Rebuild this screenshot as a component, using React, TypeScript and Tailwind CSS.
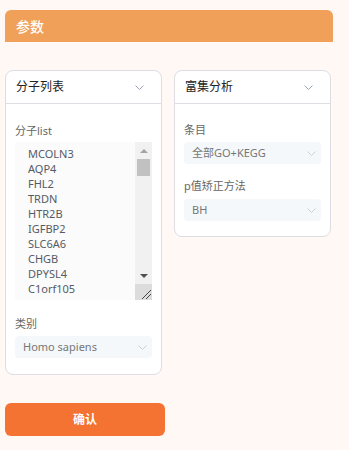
import React from "react";

const genes = [
  "MCOLN3",
  "AQP4",
  "FHL2",
  "TRDN",
  "HTR2B",
  "IGFBP2",
  "SLC6A6",
  "CHGB",
  "DPYSL4",
  "C1orf105",
  "NPR3",
];

const font = { fontFamily: '"Noto Sans", "Noto Sans CJK SC", sans-serif' };

function Chevron({ className }: { className?: string }) {
  return (
    <svg width="9" height="5" viewBox="0 0 9 5" className={className} fill="none">
      <path d="M0.5 0.5 L4.5 4.5 L8.5 0.5" stroke="currentColor" strokeWidth="1" />
    </svg>
  );
}

function SelectBox({ value }: { value: string }) {
  return (
    <div className="flex h-[22px] items-center justify-between rounded-[4px] bg-[#f4f8fa] pl-2 pr-[5px] text-[11px] text-[#777]">
      <span>{value}</span>
      <Chevron className="text-[#ccd0d6]" />
    </div>
  );
}

function CardHeader({ title }: { title: string }) {
  return (
    <div className="flex h-[33px] items-center justify-between border-b border-[#dcdee3] pl-[10px] pr-[17px]">
      <span className="text-[12px] font-normal text-[#222]">{title}</span>
      <Chevron className="text-[#9aa6b8]" />
    </div>
  );
}

export default function App() {
  return (
    <div className="min-h-[450px] w-[349px] bg-[#fff8f5] pl-[5px] pt-[10px]" style={font}>
      <div className="flex h-[32px] w-[328px] items-center rounded-t-[6px] bg-[#f0a058] pl-[11px] text-[14px] font-medium text-white">
        参数
      </div>

      <div className="mt-[28px] flex items-start gap-[12px]">
        {/* left card */}
        <div className="h-[305px] w-[157px] rounded-[8px] border border-[#dcdee3] bg-white">
          <CardHeader title="分子列表" />
          <div className="px-[9px] pt-[19px]">
            <div className="h-[16px] text-[11px] leading-[16px] text-[#666]">分子list</div>
            <div className="mt-[3px] flex h-[158px] w-[137px] overflow-hidden bg-[#fbfbfb]">
              <div className="h-[158px] flex-1 overflow-hidden pl-[13px] pt-[4px] text-[11px] leading-[15px] text-[#555a66]">
                {genes.map((g) => (
                  <div key={g}>{g}</div>
                ))}
              </div>
              <div className="flex w-[17px] flex-col bg-[#f1f1f1]">
                <div className="flex h-[17px] items-center justify-center">
                  <svg width="8" height="4" viewBox="0 0 8 4">
                    <path d="M0 4 L4 0 L8 4 Z" fill="#a3a3a3" />
                  </svg>
                </div>
                <div className="mx-[2px] h-[17px] bg-[#c1c1c1]" />
                <div className="flex-1" />
                <div className="flex h-[17px] items-center justify-center">
                  <svg width="8" height="4" viewBox="0 0 8 4">
                    <path d="M0 0 L8 0 L4 4 Z" fill="#505050" />
                  </svg>
                </div>
                <div className="flex h-[16px] items-end justify-end bg-[#dcdcdc]">
                  <svg width="14" height="14" viewBox="0 0 14 14">
                    <path d="M4 13 L13 4 M8 13 L13 8" stroke="#444" strokeWidth="1" />
                  </svg>
                </div>
              </div>
            </div>
            <div className="mt-[16px] h-[16px] text-[11px] leading-[16px] text-[#666]">类别</div>
            <div className="mt-[4px]">
              <SelectBox value="Homo sapiens" />
            </div>
          </div>
        </div>

        {/* right card */}
        <div className="h-[167px] w-[157px] rounded-[8px] border border-[#dcdee3] bg-white">
          <CardHeader title="富集分析" />
          <div className="px-[9px] pt-[18px]">
            <div className="h-[16px] text-[11px] leading-[16px] text-[#666]">条目</div>
            <div className="mt-[4px]">
              <SelectBox value="全部GO+KEGG" />
            </div>
            <div className="mt-[14px] h-[16px] text-[11px] leading-[16px] text-[#666]">p值矫正方法</div>
            <div className="mt-[5px]">
              <SelectBox value="BH" />
            </div>
          </div>
        </div>
      </div>

      <button className="mt-[28px] flex h-[33px] w-[160px] items-center justify-center rounded-[6px] bg-[#f47232] text-[12px] font-semibold text-white">
        确认
      </button>
    </div>
  );
}
